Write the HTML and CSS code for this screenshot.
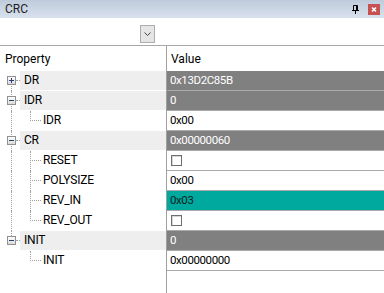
FILE: index.html
```html
<!DOCTYPE html>
<html lang="en">
<head>
    <meta charset="UTF-8">
    <meta name="viewport" content="width=device-width, initial-scale=1.0">
    <title>CRC</title>
    <link rel="stylesheet" href="styles.css">
</head>
<body>
    <div class="panel">
        <div class="titlebar">
            <span class="title">CRC</span>
            <span class="pin">
                <svg width="7" height="9" viewBox="0 0 7 9">
                    <path d="M1.5 0.5h4v5h-4z" fill="none" stroke="#000"/>
                    <path d="M4 1h1v4h-1z" fill="#000"/>
                    <path d="M0 5h7v1h-7z" fill="#000"/>
                    <path d="M3 6h1v3h-1z" fill="#000"/>
                </svg>
            </span>
            <span class="close">
                <svg width="12" height="11" viewBox="0 0 12 11">
                    <path d="M4 3.5l4 4M8 3.5l-4 4" stroke="#fff" stroke-width="1.6"/>
                </svg>
            </span>
        </div>

        <div class="toolbar">
            <button class="combo" type="button">
                <svg width="7" height="4" viewBox="0 0 7 4">
                    <path d="M0.5 0.5l3 3 3-3" fill="none" stroke="#444"/>
                </svg>
            </button>
        </div>

        <div class="grid">
            <div class="row head">
                <div class="hname">Property</div>
                <div class="hvalue">Value</div>
            </div>

            <!-- DR -->
            <div class="row">
                <div class="name">
                    <span class="gut top"><span class="exp plus"></span></span>
                    <span class="label cat">DR</span>
                </div>
                <div class="value dark">0x13D2C85B</div>
            </div>

            <!-- IDR -->
            <div class="row">
                <div class="name">
                    <span class="gut"><span class="exp"></span></span>
                    <span class="label cat">IDR</span>
                </div>
                <div class="value dark">0</div>
            </div>
            <div class="row">
                <div class="name">
                    <span class="gut line"></span>
                    <span class="gut2 last"></span>
                    <span class="label">IDR</span>
                </div>
                <div class="value">0x00</div>
            </div>

            <!-- CR -->
            <div class="row">
                <div class="name">
                    <span class="gut"><span class="exp"></span></span>
                    <span class="label cat">CR</span>
                </div>
                <div class="value dark">0x00000060</div>
            </div>
            <div class="row">
                <div class="name">
                    <span class="gut line"></span>
                    <span class="gut2"></span>
                    <span class="label">RESET</span>
                </div>
                <div class="value"><span class="check"></span></div>
            </div>
            <div class="row">
                <div class="name">
                    <span class="gut line"></span>
                    <span class="gut2"></span>
                    <span class="label">POLYSIZE</span>
                </div>
                <div class="value">0x00</div>
            </div>
            <div class="row">
                <div class="name">
                    <span class="gut line"></span>
                    <span class="gut2"></span>
                    <span class="label">REV_IN</span>
                </div>
                <div class="value teal">0x03</div>
            </div>
            <div class="row">
                <div class="name">
                    <span class="gut line"></span>
                    <span class="gut2 last"></span>
                    <span class="label">REV_OUT</span>
                </div>
                <div class="value"><span class="check"></span></div>
            </div>

            <!-- INIT -->
            <div class="row">
                <div class="name">
                    <span class="gut end"><span class="exp"></span></span>
                    <span class="label cat">INIT</span>
                </div>
                <div class="value dark">0</div>
            </div>
            <div class="row">
                <div class="name">
                    <span class="gut"></span>
                    <span class="gut2 last"></span>
                    <span class="label">INIT</span>
                </div>
                <div class="value">0x00000000</div>
            </div>
        </div>
    </div>
</body>
</html>
```

FILE: styles.css
```css
body {
    margin: 0;
    font-family: Roboto, "Liberation Sans", sans-serif;
    font-size: 12px;
    color: #000;
    background-color: #ffffff;
}

.panel {
    width: 384px;
    height: 293px;
    display: flex;
    flex-direction: column;
    overflow: hidden;
}

/* title bar */
.titlebar {
    height: 18px;
    display: flex;
    align-items: center;
    padding: 0 4px 0 5px;
    background: linear-gradient(#bfcbdb, #d8e2ee);
}

.title {
    flex: 1;
    color: #1e1e1e;
}

.pin {
    display: flex;
    margin-right: 9px;
}

.close {
    display: flex;
    width: 12px;
    height: 11px;
    background-color: #c75050;
}

/* toolbar with the combo button */
.toolbar {
    height: 27px;
    border-bottom: 1px solid #a8a8a8;
    display: flex;
    align-items: flex-start;
}

.combo {
    margin: 7px 0 0 140px;
    width: 15px;
    height: 18px;
    padding: 0;
    border: 1px solid #adadad;
    background-color: #e5e5e5;
    display: flex;
    align-items: center;
    justify-content: center;
}

/* property grid */
.grid {
    flex: 1;
    background: linear-gradient(#a0a0a0, #a0a0a0) 166px 0 / 1px 100% no-repeat;
}

.row {
    display: grid;
    grid-template-columns: 166px 1fr;
    column-gap: 1px;
    height: 20px;
}

.row.head {
    height: 25px;
    align-items: center;
}

.hname {
    padding-left: 5px;
}

.hvalue {
    padding-left: 4px;
}

.name {
    display: flex;
    height: 20px;
}

.gut {
    position: relative;
    width: 20px;
    flex: none;
}

.gut::before {
    content: "";
    position: absolute;
    left: 11px;
    top: 0;
    bottom: 0;
    border-left: 1px dotted #a0a0a0;
}

.gut.top::before {
    top: 9px;
}

.gut.end::before {
    bottom: 11px;
}

.gut:not(.line):not(.top):not(.end):empty::before {
    display: none;
}

.gut:not(:empty)::after {
    content: "";
    position: absolute;
    left: 16px;
    width: 4px;
    top: 9px;
    border-top: 1px dotted #a0a0a0;
}

.exp {
    position: absolute;
    z-index: 1;
    left: 7px;
    top: 5px;
    width: 9px;
    height: 9px;
    box-sizing: border-box;
    border: 1px solid #919191;
    background: linear-gradient(#ffffff, #dadada);
}

.exp::before {
    content: "";
    position: absolute;
    left: 1px;
    top: 3px;
    width: 5px;
    height: 1px;
    background-color: #2a3f7a;
}

.exp.plus::after {
    content: "";
    position: absolute;
    left: 3px;
    top: 1px;
    width: 1px;
    height: 5px;
    background-color: #2a3f7a;
}

.gut2 {
    position: relative;
    width: 20px;
    flex: none;
}

.gut2::before {
    content: "";
    position: absolute;
    left: 10px;
    top: 0;
    bottom: 0;
    border-left: 1px dotted #a0a0a0;
}

.gut2.last::before {
    bottom: 10px;
}

.gut2::after {
    content: "";
    position: absolute;
    left: 10px;
    width: 11px;
    top: 9px;
    border-top: 1px dotted #a0a0a0;
}

.label {
    flex: 1;
    height: 19px;
    line-height: 19px;
    padding-left: 3px;
    white-space: nowrap;
    letter-spacing: -0.2px;
}

.label.cat {
    padding-left: 4px;
    background-color: #eeeeee;
}

.value {
    height: 19px;
    line-height: 19px;
    padding-left: 3px;
    border-bottom: 1px solid #aaaaaa;
    display: flex;
    align-items: center;
    white-space: nowrap;
    font-size: 11.5px;
    letter-spacing: -0.4px;
}

.value.dark {
    background-color: #808080;
    color: #ffffff;
}

.value.teal {
    background-color: #00a99d;
    color: #0c2222;
}

.check {
    width: 11px;
    height: 11px;
    box-sizing: border-box;
    margin-left: 1px;
    border: 1px solid #6e6e6e;
    background-color: #ffffff;
    box-shadow: inset 1px 1px 0 #d8d8d8;
}
```
